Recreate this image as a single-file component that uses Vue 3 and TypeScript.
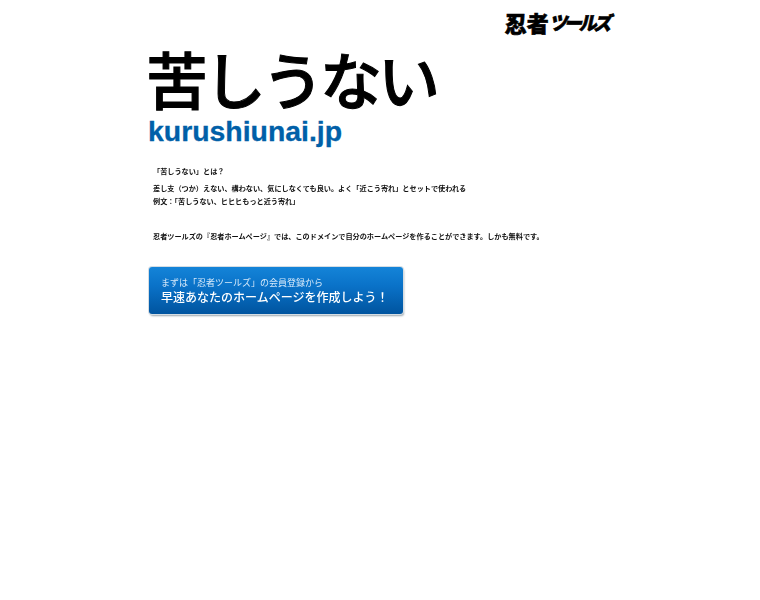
<script setup lang="ts">
// fullwidth punctuation written as escapes so it stays fullwidth
const what = '「苦しうない」とは\uFF1F'
const meaning: string[] = [
  '差し支\uFF08つか\uFF09えない、構わない、気にしなくても良い。よく「近こう寄れ」とセットで使われる',
  '例文\uFF1A「苦しうない、ヒヒヒもっと近う寄れ」',
]
const ctaBig = '早速あなたのホームページを作成しよう\uFF01'
</script>

<template>
  <div class="page">
    <div class="logo-row">
      <span class="logo">
        <span class="logo-kanji">忍者</span>
        <span class="logo-kana">ツールズ</span>
      </span>
    </div>

    <h1 class="title">苦しうない</h1>
    <div class="domain">kurushiunai.jp</div>

    <div class="body">
      <p class="what">{{ what }}</p>
      <p v-for="line in meaning" :key="line" class="line">{{ line }}</p>
      <p class="promo">忍者ツールズの『忍者ホームページ』では、このドメインで自分のホームページを作ることができます。しかも無料です。</p>
    </div>

    <a class="cta" href="#">
      <span class="cta-small">まずは「忍者ツールズ」の会員登録から</span>
      <span class="cta-big">{{ ctaBig }}</span>
    </a>
  </div>
</template>

<style scoped>
.page {
  width: 760px;
  height: 600px;
  box-sizing: border-box;
  padding: 0 0 0 148px;
  font-family: "Liberation Sans", "Noto Sans CJK JP", sans-serif;
  color: #000;
  overflow: hidden;
}

.logo-row {
  display: flex;
  justify-content: flex-end;
  padding: 8px 150px 0 0;
  height: 30px;
  box-sizing: border-box;
}

.logo {
  display: flex;
  align-items: center;
  height: 28px;
  gap: 2px;
  font-family: "Noto Sans CJK JP", sans-serif;
  font-weight: 900;
  -webkit-text-stroke: 0.6px #000;
  white-space: nowrap;
}

.logo-kanji {
  font-size: 22px;
  line-height: 28px;
}

.logo-kana {
  display: inline-block;
  font-size: 18px;
  line-height: 28px;
  letter-spacing: -3.2px;
  transform: skewX(-12deg) scaleY(1.05);
}

.title {
  margin: 9px 0 0 -2px;
  font-family: "Noto Sans CJK JP", sans-serif;
  font-weight: 500;
  font-size: 62px;
  line-height: 78px;
  letter-spacing: -4px;
  -webkit-text-stroke: 1px #000;
  white-space: nowrap;
}

.domain {
  font-weight: 700;
  font-size: 28.4px;
  line-height: 28px;
  color: #0060a8;
  -webkit-text-stroke: 0.3px #0060a8;
}

.body {
  padding: 20px 0 0 5px;
  font-family: "Noto Sans CJK JP", sans-serif;
  font-weight: 700;
  font-size: 7.15px;
  color: #111;
  filter: blur(0.25px);
}

.body p {
  margin: 0;
  white-space: nowrap;
}

.what {
  line-height: 12px;
  margin-bottom: 5px !important;
}

.line {
  line-height: 12.5px;
}

.promo {
  margin-top: 23px !important;
  line-height: 12px;
}

.cta {
  display: flex;
  flex-direction: column;
  box-sizing: border-box;
  width: 254px;
  height: 47px;
  margin: 25px 0 0 1px;
  padding: 9px 0 0 12px;
  border-radius: 3px;
  background: linear-gradient(#1484d8 0%, #0a72c8 40%, #00549f 100%);
  box-shadow: 0 0 0 1px #d5dde3, 1px 2px 2px #9aa5ad;
  color: #fff;
  text-decoration: none;
  font-family: "Noto Sans CJK JP", sans-serif;
  white-space: nowrap;
}

.cta-small {
  font-size: 9px;
  line-height: 13px;
  color: #d8eafa;
  filter: blur(0.2px);
}

.cta-big {
  font-size: 12px;
  font-weight: 500;
  line-height: 15px;
  filter: blur(0.2px);
}
</style>
